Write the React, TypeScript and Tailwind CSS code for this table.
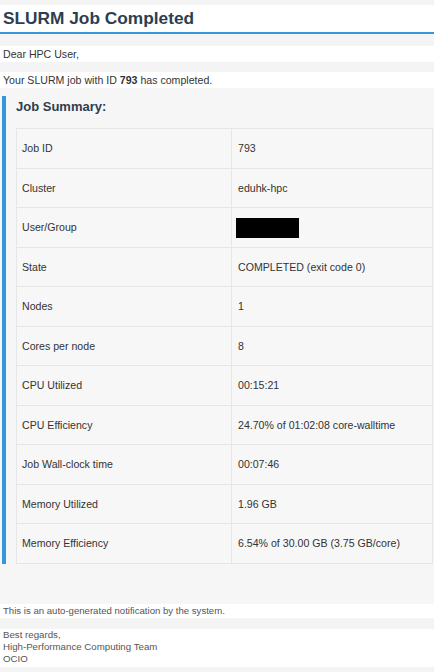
import React from "react";

const rows: [string, string | null][] = [
  ["Job ID", "793"],
  ["Cluster", "eduhk-hpc"],
  ["User/Group", null],
  ["State", "COMPLETED (exit code 0)"],
  ["Nodes", "1"],
  ["Cores per node", "8"],
  ["CPU Utilized", "00:15:21"],
  ["CPU Efficiency", "24.70% of 01:02:08 core-walltime"],
  ["Job Wall-clock time", "00:07:46"],
  ["Memory Utilized", "1.96 GB"],
  ["Memory Efficiency", "6.54% of 30.00 GB (3.75 GB/core)"],
];

export default function App() {
  return (
    <div
      className="w-[434px] h-[672px] overflow-hidden bg-[#f4f4f4] text-[#333]"
      style={{ fontFamily: '"Liberation Sans", Arial, sans-serif' }}
    >
      <div className="pt-[5px]">
        <h1 className="bg-white text-[#2c3e50] font-bold text-[17.3px] leading-[26px] pl-[3px] border-b-2 border-[#3498db] pb-[1px]">
          SLURM Job Completed
        </h1>
      </div>
      <div className="mt-[12px] bg-white text-[10.6px] leading-[14px] pl-[3px] py-[1px]">Dear HPC User,</div>
      <div className="mt-[10px] bg-white text-[10.6px] leading-[14px] pl-[3px] py-[1px]">
        Your SLURM job with ID <b>793</b> has completed.
      </div>
      <div className="pt-[8px] pb-[40px] bg-[#f6f6f6]">
        <div className="ml-[2px] border-l-4 border-[#3498db] pl-[10px]">
          <div className="text-[13px] font-bold leading-[20px] text-[#2c3e50] py-[1px]">Job Summary:</div>
          <table className="mt-[10px] w-[417px] border-collapse bg-[#f7f7f7] text-[10.6px] leading-[14px] text-[#333]">
            <tbody>
              {rows.map(([k, v]) => (
                <tr key={k} className="h-[39.5px]">
                  <td className="w-[215px] border border-[#e6e6e6] pl-[5px] py-0 align-middle">{k}</td>
                  <td className="border border-[#e6e6e6] pl-[6px] py-0 align-middle">
                    {v === null ? (
                      <span className="inline-block w-[63px] h-[20px] bg-black align-middle mt-[1px] ml-[-2px]" />
                    ) : (
                      v
                    )}
                  </td>
                </tr>
              ))}
            </tbody>
          </table>
        </div>
      </div>
      <div className="bg-white text-[9.6px] leading-[12px] text-[#555] pl-[3px] py-[1px]">
        This is an auto-generated notification by the system.
      </div>
      <div className="mt-[11px] bg-white text-[9.7px] leading-[12px] text-[#555] pl-[3px] pb-[2px]">
        <div>Best regards,</div>
        <div>High-Performance Computing Team</div>
        <div>OCIO</div>
      </div>
    </div>
  );
}
